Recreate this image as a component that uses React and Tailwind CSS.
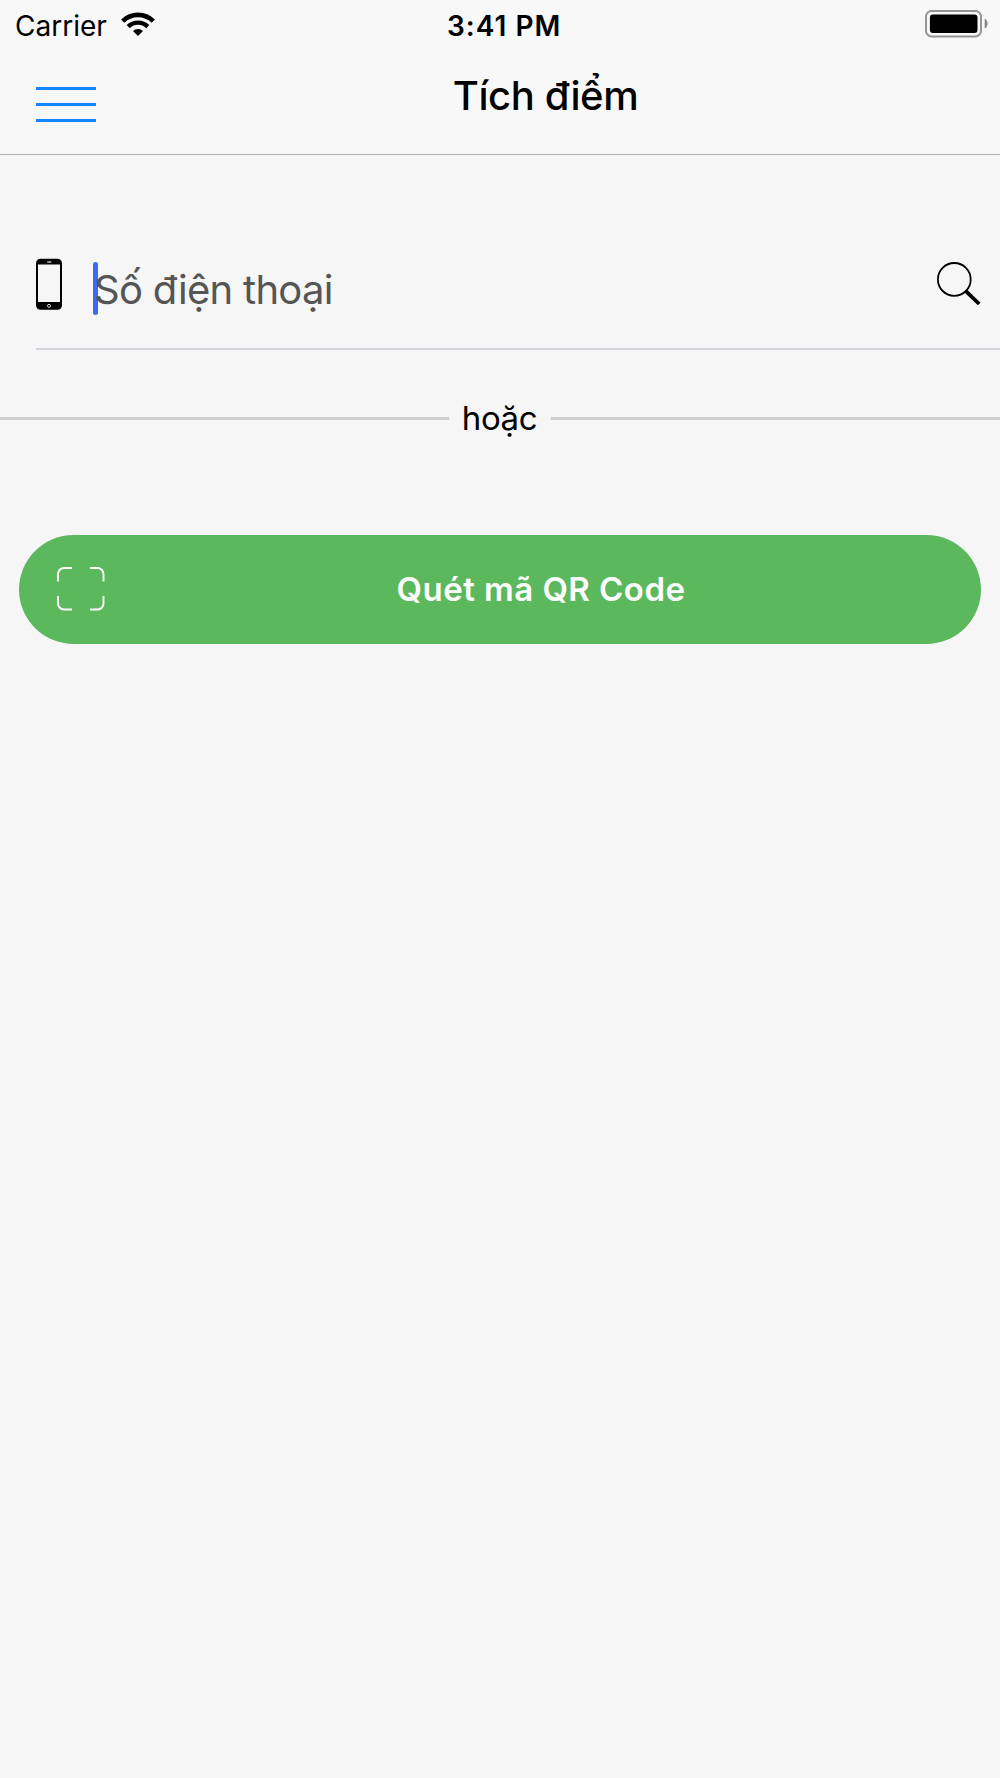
const WifiIcon = () => (
  <svg className="mb-[3px]" width="34" height="24" viewBox="0 0 34 24" fill="none">
    <path d="M1.7 9.1a22 22 0 0 1 30.6 0" stroke="black" strokeWidth="4.6" />
    <path d="M7.2 14.6a14 14 0 0 1 19.6 0" stroke="black" strokeWidth="4.4" />
    <path d="M12 19a7.4 7.4 0 0 1 10 0L17 24z" fill="black" />
  </svg>
);

const BatteryIcon = () => (
  <svg className="mb-[3px]" width="64" height="28" viewBox="0 0 64 28" fill="none">
    <rect x="1" y="1" width="55" height="25.4" rx="5.5" stroke="#959595" strokeWidth="2" />
    <rect x="4.9" y="4.6" width="47.6" height="18.4" rx="3" fill="black" />
    <path d="M59.7 8.6a5.8 5.8 0 0 1 0 10z" fill="#868686" />
  </svg>
);

const PhoneIcon = () => (
  <svg width="26" height="52" viewBox="0 0 26 52">
    <rect x="0" y="0.8" width="26" height="51" rx="4.5" fill="black" />
    <rect x="2" y="6.5" width="22" height="37.5" fill="#f6f6f6" />
    <rect x="11" y="3.2" width="4.5" height="1.5" rx="0.75" fill="#bbbbbb" />
    <circle cx="13" cy="47.8" r="1.5" fill="none" stroke="#dddddd" strokeWidth="1" />
  </svg>
);

const SearchIcon = () => (
  <svg width="44" height="44" viewBox="0 0 44 44" fill="none" stroke="black">
    <circle cx="17.3" cy="17.4" r="16.4" strokeWidth="1.8" />
    <path d="M28.6 28.8L42.2 42" strokeWidth="3.8" />
  </svg>
);

const ScanIcon = () => (
  <svg width="48" height="44" viewBox="0 0 48 44" fill="none" stroke="white" strokeWidth="1.9">
    <path d="M1 14.6V7a6 6 0 0 1 6-6h8" />
    <path d="M33 1h7.5a6 6 0 0 1 6 6v7.6" />
    <path d="M46.5 29v7.5a6 6 0 0 1-6 6H33" />
    <path d="M15 42.5H7a6 6 0 0 1-6-6V29" />
  </svg>
);

const StatusBar = () => (
  <div className="grid grid-cols-[447px_1fr_75px] items-center h-[50px]">
    <div className="flex items-center pl-[15px]">
      <span className="w-[106px] pt-px text-[28px] leading-[50px]">Carrier</span>
      <WifiIcon />
    </div>
    <span className="pt-px text-[28px] leading-[50px] font-semibold tracking-[1px] whitespace-nowrap">3:41 PM</span>
    <BatteryIcon />
  </div>
);

const App = () => {
  return (
    <div className="min-h-[1778px] bg-[#f6f6f6] text-black font-['Inter',sans-serif]">
      {/* Header */}
      <header className="h-[155px] bg-[#f8f8f8] border-b border-[#b2b2b2]">
        <StatusBar />
        <div className="flex items-start pl-9 pr-[5px]">
          <button className="flex flex-col gap-[13px] w-[60px] pt-[37px]">
            <span className="w-full h-[3px] bg-[#1486ff]"></span>
            <span className="w-full h-[3px] bg-[#1486ff]"></span>
            <span className="w-full h-[3px] bg-[#1486ff]"></span>
          </button>
          <h1 className="flex-1 text-center text-[40px] leading-[92px] font-medium tracking-[-0.4px]">Tích điểm</h1>
        </div>
      </header>

      {/* Phone number */}
      <div className="ml-9 h-[195px] pt-[103px] pr-[19px] flex items-start border-b-2 border-[#d2d2d8]">
        <PhoneIcon />
        <span className="ml-[31px] mt-[4px] w-[5px] h-[53px] rounded-full bg-[#4169f0]"></span>
        <span className="-ml-[4px] flex-1 text-[40px] leading-[64px] tracking-[-0.7px] text-[#555555]">Số điện thoại</span>
        <div className="mt-[4px]">
          <SearchIcon />
        </div>
      </div>

      {/* Divider */}
      <div className="mt-[44px] h-[48px] flex items-center">
        <div className="w-[449px] h-[3px] bg-[#d0d0d0]"></div>
        <span className="w-[102px] text-center text-[33px] leading-[48px] tracking-[-0.4px] pr-px">hoặc</span>
        <div className="flex-1 h-[3px] bg-[#d0d0d0]"></div>
      </div>

      {/* QR button */}
      <button className="mt-[93px] ml-[19px] w-[962px] h-[109px] pl-[38px] pb-[2px] flex items-center rounded-full bg-[#5cb85c] text-white">
        <ScanIcon />
        <span className="flex-1 text-center text-[33px] leading-[50px] font-semibold tracking-[0.45px] pr-[4px]">Quét mã QR Code</span>
      </button>
    </div>
  );
};

export default App;
